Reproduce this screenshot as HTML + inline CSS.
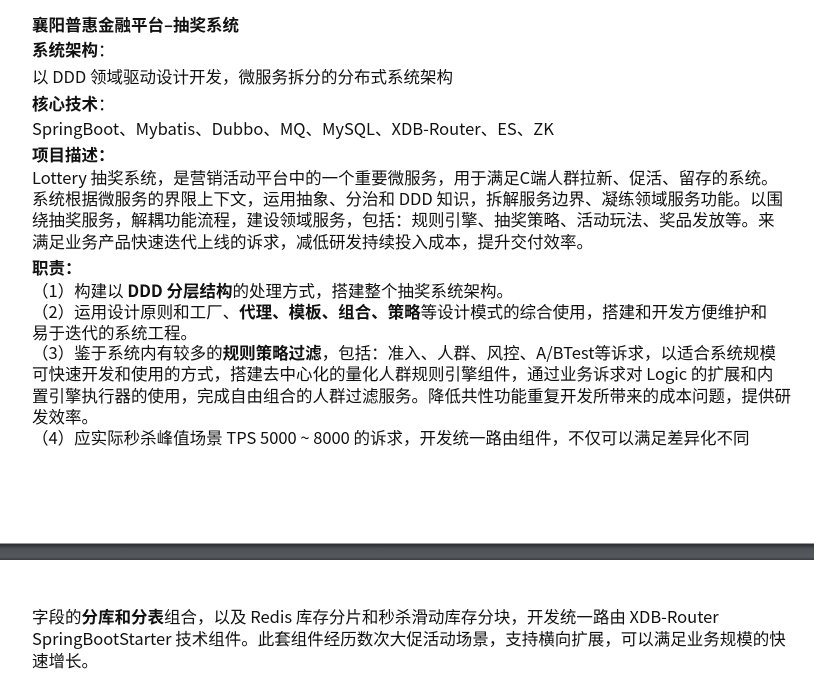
<!DOCTYPE html>
<html><head><meta charset="utf-8"><style>
body{margin:0;width:814px;height:679px;background:#fff;position:relative;overflow:hidden;font-family:"Noto Sans CJK SC","Liberation Sans",sans-serif;color:#111;font-size:16.5px}
.l{position:absolute;left:32px;line-height:22px;white-space:nowrap;margin-top:-1px}
b{font-weight:bold}
.bar{position:absolute;left:0;top:543px;width:814px;height:16px;background:linear-gradient(#2a2c2f,#4e5155 30%,#55585c 80%,#3a3c40);border-top:1px solid #999}
</style></head><body>
<div class="l" style="top:14px"><b>襄阳普惠金融平台–抽奖系统</b></div>
<div class="l" style="top:39px"><b>系统架构</b>：</div>
<div class="l" style="top:66px">以 DDD 领域驱动设计开发，微服务拆分的分布式系统架构</div>
<div class="l" style="top:93px"><b>核心技术</b>：</div>
<div class="l" style="top:118px">SpringBoot、Mybatis、Dubbo、MQ、MySQL、XDB-Router、ES、ZK</div>
<div class="l" style="top:144px"><b>项目描述：</b></div>
<div class="l" style="top:167px">Lottery 抽奖系统，是营销活动平台中的一个重要微服务，用于满足C端人群拉新、促活、留存的系统。</div>
<div class="l" style="top:188px">系统根据微服务的界限上下文，运用抽象、分治和 DDD 知识，拆解服务边界、凝练领域服务功能。以围</div>
<div class="l" style="top:209px">绕抽奖服务，解耦功能流程，建设领域服务，包括：规则引擎、抽奖策略、活动玩法、奖品发放等。来</div>
<div class="l" style="top:231px">满足业务产品快速迭代上线的诉求，减低研发持续投入成本，提升交付效率。</div>
<div class="l" style="top:257px"><b>职责：</b></div>
<div class="l" style="top:280px">（1）构建以 <b>DDD 分层结构</b>的处理方式，搭建整个抽奖系统架构。</div>
<div class="l" style="top:301px">（2）运用设计原则和工厂、<b>代理、模板、组合、策略</b>等设计模式的综合使用，搭建和开发方便维护和</div>
<div class="l" style="top:322px">易于迭代的系统工程。</div>
<div class="l" style="top:342px">（3）鉴于系统内有较多的<b>规则策略过滤</b>，包括：准入、人群、风控、A/BTest等诉求，以适合系统规模</div>
<div class="l" style="top:363px">可快速开发和使用的方式，搭建去中心化的量化人群规则引擎组件，通过业务诉求对 Logic 的扩展和内</div>
<div class="l" style="top:385px">置引擎执行器的使用，完成自由组合的人群过滤服务。降低共性功能重复开发所带来的成本问题，提供研</div>
<div class="l" style="top:406px">发效率。</div>
<div class="l" style="top:427px">（4）应实际秒杀峰值场景 TPS 5000 ~ 8000 的诉求，开发统一路由组件，不仅可以满足差异化不同</div>
<div class="bar"></div>
<div class="l" style="top:606px">字段的<b>分库和分表</b>组合，以及 Redis 库存分片和秒杀滑动库存分块，开发统一路由 XDB-Router</div>
<div class="l" style="top:628px">SpringBootStarter 技术组件。此套组件经历数次大促活动场景，支持横向扩展，可以满足业务规模的快</div>
<div class="l" style="top:650px">速增长。</div>
</body></html>
